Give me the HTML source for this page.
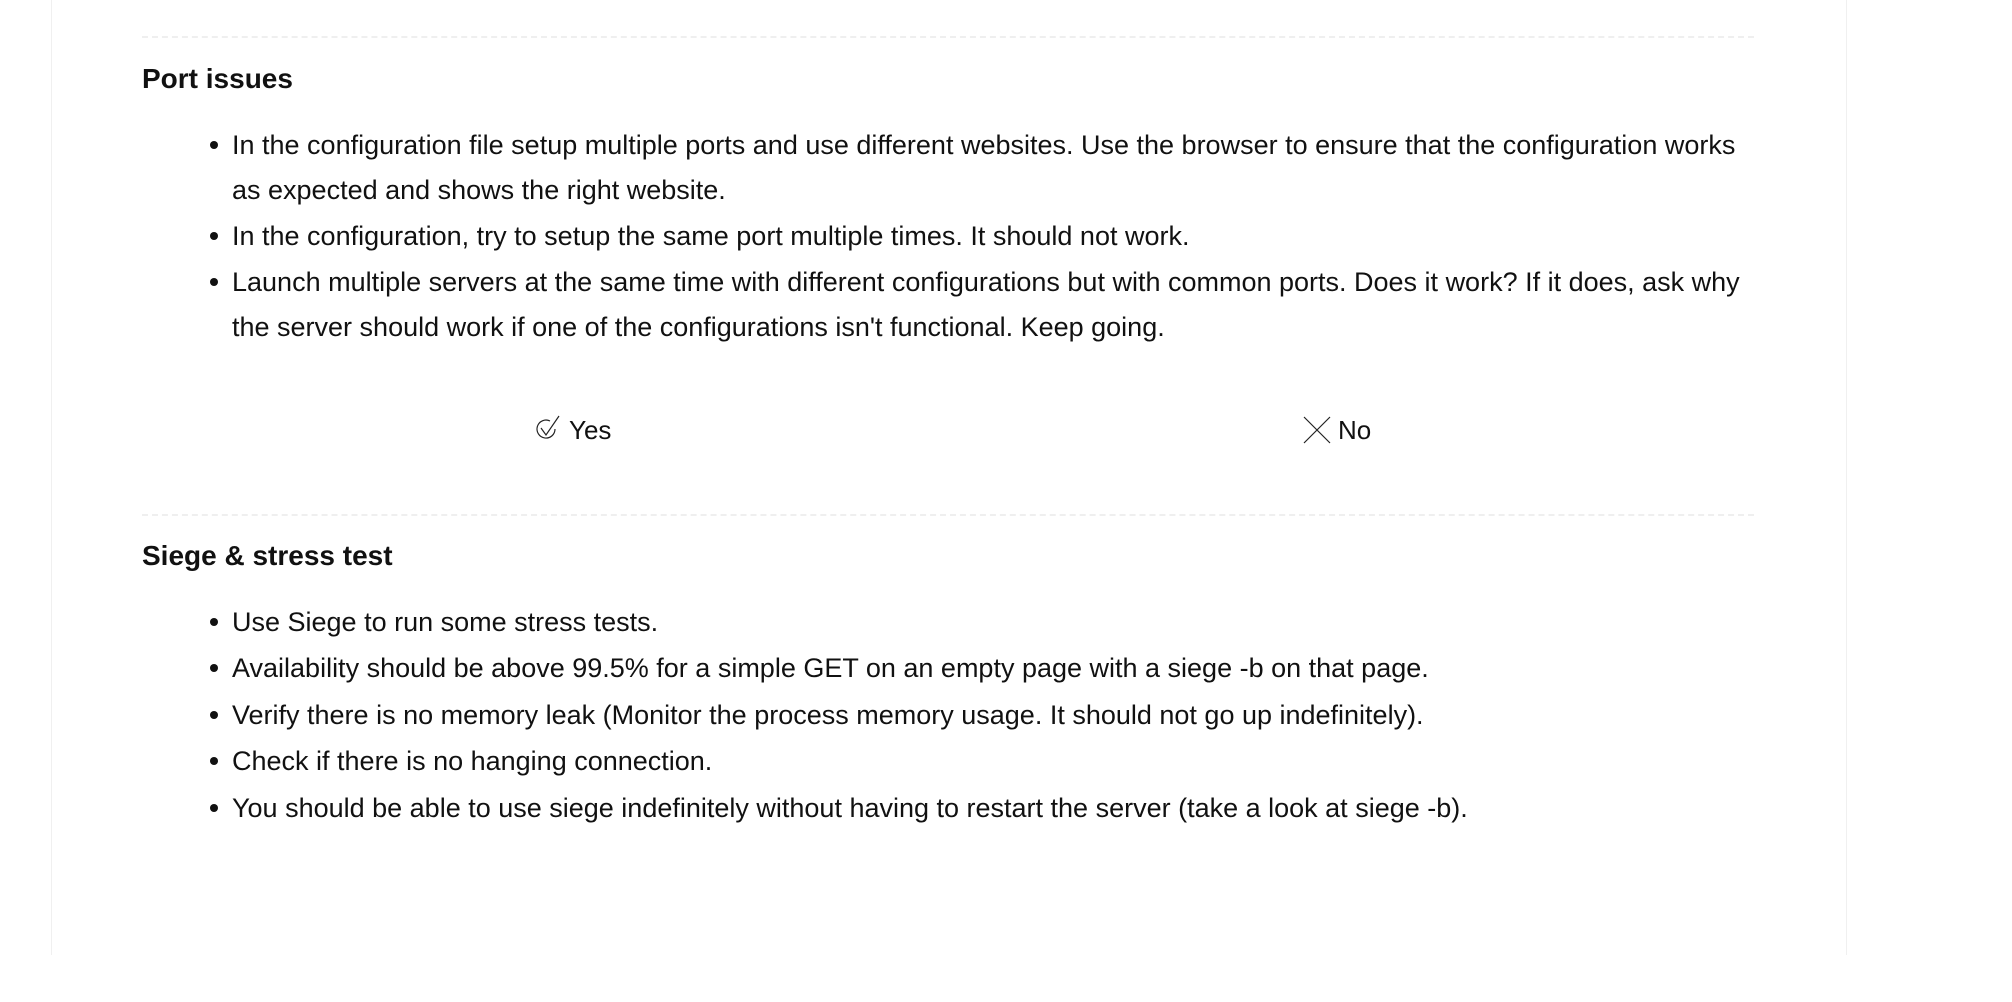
<!DOCTYPE html>
<html><head><meta charset="utf-8"><style>
body{margin:0;width:2012px;height:1002px;background:#fff;font-family:"Liberation Sans",sans-serif;color:#111;position:relative;overflow:hidden}
.box{position:absolute;left:51px;top:0;width:1794px;height:955px;border-left:1px solid #f0f0f0;border-right:1px solid #f0f0f0;background:#fff}
.dash{position:absolute;left:142px;width:1612px;border-top:2px dashed #efefef}
h2{position:absolute;left:142px;margin:0;font-size:28px;font-weight:bold;line-height:40px}
.l{position:absolute;left:232px;font-size:27px;line-height:46px;width:1540px;white-space:nowrap}
.l::before{content:"";position:absolute;left:-22px;top:19px;width:8px;height:8px;border-radius:50%;background:#111}
.n::before{display:none}
.opt{position:absolute;font-size:26px;line-height:30px;display:flex;align-items:center;gap:6px}
</style></head><body>
<div class="box"></div>
<div class="dash" style="top:36px"></div>
<h2 style="top:59px">Port issues</h2>
<div class="l" style="top:122px">In the configuration file setup multiple ports and use different websites. Use the browser to ensure that the configuration works</div>
<div class="l n" style="top:167px">as expected and shows the right website.</div>
<div class="l" style="top:213px">In the configuration, try to setup the same port multiple times. It should not work.</div>
<div class="l" style="top:259px">Launch multiple servers at the same time with different configurations but with common ports. Does it work? If it does, ask why</div>
<div class="l n" style="top:304px">the server should work if one of the configurations isn't functional. Keep going.</div>
<div class="opt" style="left:535px;top:415px"><svg width="28" height="30" viewBox="0 0 28 30"><path d="M20 14a9 9 0 1 1-5-8" fill="none" stroke="#222" stroke-width="1.2"/><path d="M6 13l5 7L24 1" fill="none" stroke="#222" stroke-width="1.2"/></svg><span>Yes</span></div>
<div class="opt" style="left:1302px;top:415px"><svg width="30" height="30" viewBox="0 0 30 30"><path d="M2 2l26 26M28 2L2 28" stroke="#222" stroke-width="1.2"/></svg><span>No</span></div>
<div class="dash" style="top:514px"></div>
<h2 style="top:536px">Siege &amp; stress test</h2>
<div class="l" style="top:599px">Use Siege to run some stress tests.</div>
<div class="l" style="top:645px">Availability should be above 99.5% for a simple GET on an empty page with a siege -b on that page.</div>
<div class="l" style="top:692px">Verify there is no memory leak (Monitor the process memory usage. It should not go up indefinitely).</div>
<div class="l" style="top:738px">Check if there is no hanging connection.</div>
<div class="l" style="top:785px">You should be able to use siege indefinitely without having to restart the server (take a look at siege -b).</div>
</body></html>
